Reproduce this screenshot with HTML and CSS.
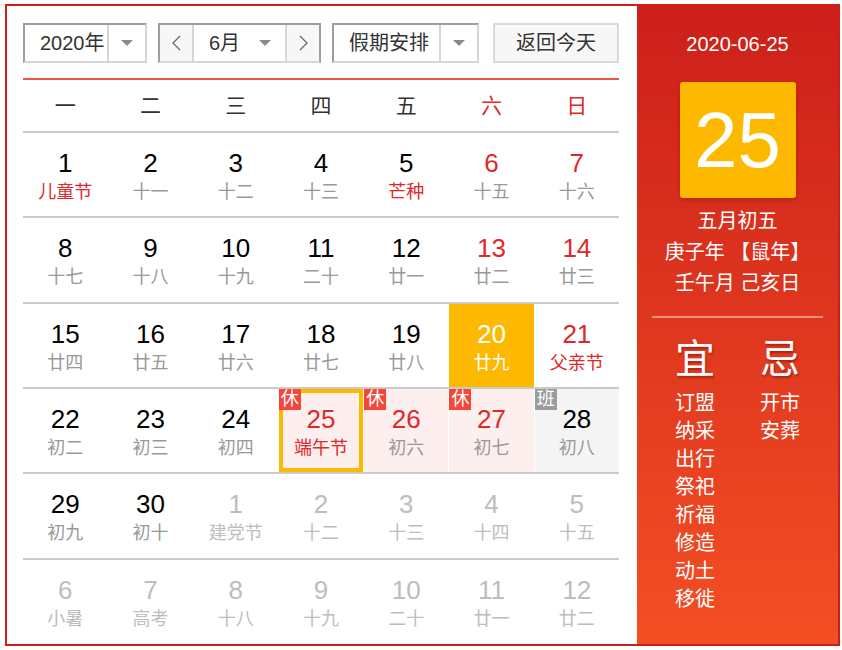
FILE: index.html
```html
<!DOCTYPE html>
<html lang="zh-CN">
<head>
<meta charset="utf-8">
<title>万年历</title>
<link rel="stylesheet" href="styles.css">
</head>
<body>
<div class="cal">
  <div class="main">
    <div class="toolbar">
      <div class="sel sel-year">
        <div class="sel-text">2020年</div>
        <div class="sel-arrow"><span class="tri"></span></div>
      </div>
      <div class="sel sel-month">
        <div class="nav nav-prev"><svg width="9" height="16" viewBox="0 0 9 16"><polyline points="8,1 1,8 8,15" fill="none" stroke="#666" stroke-width="1.2"/></svg></div>
        <div class="month-mid"><span class="month-text">6月</span><span class="tri"></span></div>
        <div class="nav nav-next"><svg width="9" height="16" viewBox="0 0 9 16"><polyline points="1,1 8,8 1,15" fill="none" stroke="#666" stroke-width="1.2"/></svg></div>
      </div>
      <div class="sel sel-holiday">
        <div class="sel-text">假期安排</div>
        <div class="sel-arrow"><span class="tri"></span></div>
      </div>
      <div class="btn-today">返回今天</div>
    </div>

    <div class="weekhead">
      <div>一</div><div>二</div><div>三</div><div>四</div><div>五</div><div class="we">六</div><div class="we">日</div>
    </div>

    <div class="week">
      <div class="day"><div class="num">1</div><div class="lunar fest">儿童节</div></div>
      <div class="day"><div class="num">2</div><div class="lunar">十一</div></div>
      <div class="day"><div class="num">3</div><div class="lunar">十二</div></div>
      <div class="day"><div class="num">4</div><div class="lunar">十三</div></div>
      <div class="day"><div class="num">5</div><div class="lunar fest">芒种</div></div>
      <div class="day we"><div class="num">6</div><div class="lunar">十五</div></div>
      <div class="day we"><div class="num">7</div><div class="lunar">十六</div></div>
    </div>
    <div class="week">
      <div class="day"><div class="num">8</div><div class="lunar">十七</div></div>
      <div class="day"><div class="num">9</div><div class="lunar">十八</div></div>
      <div class="day"><div class="num">10</div><div class="lunar">十九</div></div>
      <div class="day"><div class="num">11</div><div class="lunar">二十</div></div>
      <div class="day"><div class="num">12</div><div class="lunar">廿一</div></div>
      <div class="day we"><div class="num">13</div><div class="lunar">廿二</div></div>
      <div class="day we"><div class="num">14</div><div class="lunar">廿三</div></div>
    </div>
    <div class="week">
      <div class="day"><div class="num">15</div><div class="lunar">廿四</div></div>
      <div class="day"><div class="num">16</div><div class="lunar">廿五</div></div>
      <div class="day"><div class="num">17</div><div class="lunar">廿六</div></div>
      <div class="day"><div class="num">18</div><div class="lunar">廿七</div></div>
      <div class="day"><div class="num">19</div><div class="lunar">廿八</div></div>
      <div class="day we hover"><div class="num">20</div><div class="lunar">廿九</div></div>
      <div class="day we"><div class="num">21</div><div class="lunar fest">父亲节</div></div>
    </div>
    <div class="week">
      <div class="day"><div class="num">22</div><div class="lunar">初二</div></div>
      <div class="day"><div class="num">23</div><div class="lunar">初三</div></div>
      <div class="day"><div class="num">24</div><div class="lunar">初四</div></div>
      <div class="day rest today"><span class="badge">休</span><div class="num">25</div><div class="lunar fest">端午节</div></div>
      <div class="day rest"><span class="badge">休</span><div class="num">26</div><div class="lunar">初六</div></div>
      <div class="day rest"><span class="badge">休</span><div class="num">27</div><div class="lunar">初七</div></div>
      <div class="day work"><span class="badge">班</span><div class="num">28</div><div class="lunar">初八</div></div>
    </div>
    <div class="week">
      <div class="day"><div class="num">29</div><div class="lunar">初九</div></div>
      <div class="day"><div class="num">30</div><div class="lunar">初十</div></div>
      <div class="day other"><div class="num">1</div><div class="lunar">建党节</div></div>
      <div class="day other"><div class="num">2</div><div class="lunar">十二</div></div>
      <div class="day other"><div class="num">3</div><div class="lunar">十三</div></div>
      <div class="day other"><div class="num">4</div><div class="lunar">十四</div></div>
      <div class="day other"><div class="num">5</div><div class="lunar">十五</div></div>
    </div>
    <div class="week">
      <div class="day other"><div class="num">6</div><div class="lunar">小暑</div></div>
      <div class="day other"><div class="num">7</div><div class="lunar">高考</div></div>
      <div class="day other"><div class="num">8</div><div class="lunar">十八</div></div>
      <div class="day other"><div class="num">9</div><div class="lunar">十九</div></div>
      <div class="day other"><div class="num">10</div><div class="lunar">二十</div></div>
      <div class="day other"><div class="num">11</div><div class="lunar">廿一</div></div>
      <div class="day other"><div class="num">12</div><div class="lunar">廿二</div></div>
    </div>
  </div>

  <div class="side">
    <div class="side-date">2020-06-25</div>
    <div class="big-day">25</div>
    <div class="side-info">
      <div>五月初五</div>
      <div>庚子年 【鼠年】</div>
      <div>壬午月 己亥日</div>
    </div>
    <div class="side-line"></div>
    <div class="yiji">
      <div class="yj-col">
        <div class="yj-title">宜</div>
        <div class="yj-item">订盟</div>
        <div class="yj-item">纳采</div>
        <div class="yj-item">出行</div>
        <div class="yj-item">祭祀</div>
        <div class="yj-item">祈福</div>
        <div class="yj-item">修造</div>
        <div class="yj-item">动土</div>
        <div class="yj-item">移徙</div>
      </div>
      <div class="yj-col">
        <div class="yj-title">忌</div>
        <div class="yj-item">开市</div>
        <div class="yj-item">安葬</div>
      </div>
    </div>
  </div>
</div>
</body>
</html>
```

FILE: styles.css
```css
* { box-sizing: border-box; }
html, body { margin: 0; padding: 0; background: #fff; }
body {
  font-family: "Liberation Sans", "Noto Sans CJK SC", sans-serif;
  color: #333;
}
.cal {
  margin: 4px 0 0 5px;
  width: 835px;
  height: 642px;
  border: 2px solid #cc1f1a;
  display: flex;
  background: #fff;
}
.main {
  width: 630px;
  padding: 17px 18px 0 16px;
}
.toolbar {
  display: flex;
  height: 40px;
}
.sel {
  display: flex;
  height: 40px;
  border: 2px solid #d6d6d6;
  border-top-color: #9e9e9e;
  border-left-color: #9e9e9e;
  font-size: 20px;
  line-height: 36px;
  color: #333;
}
.sel-year { width: 124px; }
.sel-month { width: 163px; margin-left: 11px; border-right-color: #9e9e9e; }
.sel-holiday { width: 147px; margin-left: 11px; }
.sel-text { flex: 1; padding-left: 15px; }
.sel-arrow {
  width: 38px;
  border-left: 2px solid #d6d6d6;
  display: flex;
  align-items: center;
  justify-content: center;
}
.tri {
  display: inline-block;
  width: 0; height: 0;
  border-left: 6px solid transparent;
  border-right: 6px solid transparent;
  border-top: 6px solid #8a8a8a;
}
.nav {
  width: 34px;
  background: #f7f7f7;
  display: flex;
  align-items: center;
  justify-content: center;
}
.nav-prev { border-right: 2px solid #d6d6d6; }
.nav-next { border-left: 2px solid #d6d6d6; }
.month-mid {
  flex: 1;
  display: flex;
  align-items: center;
  justify-content: space-between;
  padding: 0 14px 0 15px;
}
.btn-today {
  width: 126px;
  height: 40px;
  margin-left: 14px;
  border: 2px solid #dadada;
  background: #f7f7f7;
  font-size: 20px;
  line-height: 36px;
  text-align: center;
  color: #333;
}
.weekhead {
  margin-top: 15px;
  border-top: 2px solid #f0544b;
  height: 53px;
  display: grid;
  grid-template-columns: repeat(7, 1fr);
  column-gap: 1px;
  font-size: 21px;
  line-height: 51px;
  text-align: center;
  color: #333;
}
.weekhead .we { color: #e0282a; }
.week {
  border-top: 2px solid #cacaca;
  height: 85.33px;
  display: grid;
  grid-template-columns: repeat(7, 1fr);
  column-gap: 1px;
}
.day {
  position: relative;
  text-align: center;
  padding-top: 15px;
}
.num {
  font-size: 26px;
  line-height: 30px;
  color: #000;
}
.lunar {
  font-size: 18px;
  line-height: 28px;
  color: #999;
}
.lunar.fest { color: #e0282a; }
.day.we .num { color: #e0282a; }
.day.hover { background: #fdb900; }
.day.hover .num, .day.hover .lunar { color: #fff; }
.day.rest { background: #fdefee; }
.day.rest .num { color: #e0282a; }
.day.today { box-shadow: inset 0 0 0 4px #fdb900; }
.day.work { background: #f4f4f4; }
.badge {
  position: absolute;
  top: 0;
  left: 0;
  width: 22px;
  height: 21px;
  background: #f4463a;
  color: #fff;
  font-size: 18px;
  line-height: 21px;
  text-align: center;
}
.day.work .badge { background: #9b9b9b; }
.day.other .num, .day.other .lunar { color: #bdbdbd; }

.side {
  width: 201px;
  background: linear-gradient(to bottom, #cc1f1a 0%, #f34f24 100%);
  color: #fff;
  text-align: center;
  padding-top: 26px;
  display: flex;
  flex-direction: column;
  align-items: center;
}
.side-date {
  font-size: 20px;
  line-height: 24px;
}
.big-day {
  margin-top: 26px;
  width: 116px;
  height: 116px;
  background: #fdb900;
  border-radius: 3px;
  box-shadow: 0 2px 4px rgba(120, 20, 0, 0.35);
  font-size: 78px;
  line-height: 116px;
}
.side-info {
  margin-top: 8px;
  font-size: 20px;
  line-height: 31px;
}
.side-line {
  margin-top: 17px;
  width: 171px;
  height: 2px;
  background: rgba(255, 255, 255, 0.45);
}
.yiji {
  margin-top: 19px;
  display: flex;
  justify-content: center;
  gap: 44px;
}
.yj-col {
  width: 41px;
  display: flex;
  flex-direction: column;
  align-items: center;
}
.yj-title {
  font-size: 40px;
  line-height: 44px;
  margin-bottom: 8px;
  text-shadow: 1px 2px 2px rgba(100, 10, 0, 0.45);
}
.yj-item {
  font-size: 20px;
  line-height: 28px;
  white-space: nowrap;
}
```
